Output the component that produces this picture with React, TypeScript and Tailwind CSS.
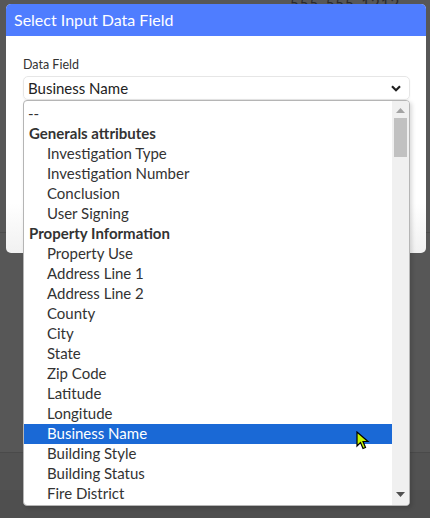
import React from 'react';

type Row = { label: string; group?: boolean; selected?: boolean };

const rows: Row[] = [
  { label: '--' },
  { label: 'Generals attributes', group: true },
  { label: 'Investigation Type' },
  { label: 'Investigation Number' },
  { label: 'Conclusion' },
  { label: 'User Signing' },
  { label: 'Property Information', group: true },
  { label: 'Property Use' },
  { label: 'Address Line 1' },
  { label: 'Address Line 2' },
  { label: 'County' },
  { label: 'City' },
  { label: 'State' },
  { label: 'Zip Code' },
  { label: 'Latitude' },
  { label: 'Longitude' },
  { label: 'Business Name', selected: true },
  { label: 'Building Style' },
  { label: 'Building Status' },
  { label: 'Fire District' },
];

const Cursor = () => (
  <svg width="14" height="20" viewBox="0 0 14 20" className="absolute left-[356px] top-[431px]">
    <path d="M1 1 L1 15 L4.5 11.5 L7 17.5 L9.5 16.5 L7 10.5 L12 10.5 Z" fill="#c6f500" stroke="#000" strokeWidth="1.2" />
  </svg>
);

export default function App() {
  return (
    <div className="relative w-[430px] h-[518px] overflow-hidden bg-[#575757] font-['Lato','Noto_Sans',sans-serif] text-[#333]">
      {/* page behind the overlay */}
      <div className="absolute left-[290px] top-[-8px] text-[15px] tracking-[1px] text-[#2a2a2a]">555-555-1212</div>
      <div className="absolute left-0 top-[232px] w-full h-px bg-[#4c4c4c]" />
      <div className="absolute left-0 top-[452px] w-full h-[38px] bg-[#525252] border-t border-[#4a4a4a]" />
      <div className="absolute left-0 top-[490px] w-full h-[28px] bg-[#4f4f4f]" />

      {/* modal */}
      <div className="absolute left-[6px] top-[4px] w-[420px] rounded-[5px] overflow-hidden bg-gradient-to-b from-white from-80% to-[#f1f1f1]">
        <div className="h-[32px] bg-[#4f7dff] flex items-center pl-[8px] text-white text-[16px]">
          Select Input Data Field
        </div>
        <div className="h-[217px] px-[17px] pt-[21px]">
          <div className="text-[12.5px] leading-[16px] text-[#333]">Data Field</div>
          <div className="mt-[3px] h-[24px] w-[387px] rounded-[5px] border border-[#e6e6e6] shadow-[0_1px_2px_rgba(0,0,0,0.06)] flex items-center justify-between pl-[4px] pr-[8px] text-[15px] text-[#222]">
            <span>Business Name</span>
            <svg width="10" height="7" viewBox="0 0 10 7">
              <path d="M1 1.2 L5 5.2 L9 1.2" fill="none" stroke="#222" strokeWidth="2.2" />
            </svg>
          </div>
        </div>
      </div>

      {/* open list */}
      <div className="absolute left-[23px] top-[100px] w-[387px] h-[406px] bg-white border border-[#b5b5b5] rounded-[4px] shadow-[2px_2px_4px_rgba(0,0,0,0.15)] overflow-hidden flex">
        <div className="flex-1 pt-[3px]">
          {rows.map((r) => (
            <div
              key={r.label}
              className={`h-[20px] flex items-center pb-[2px] text-[15px] whitespace-nowrap ${
                r.group ? 'pl-[5px] font-bold' : r.label === '--' ? 'pl-[4px]' : 'pl-[23px]'
              } ${r.selected ? 'bg-[#1a69d6] text-white' : 'text-[#333]'}`}
            >
              {r.label}
            </div>
          ))}
        </div>
        <div className="w-[17px] bg-[#f0f0f0] flex flex-col items-center">
          <svg width="9" height="5" viewBox="0 0 9 5" className="mt-[7px]">
            <path d="M0 5 L4.5 0 L9 5 Z" fill="#a3a3a3" />
          </svg>
          <div className="mt-[5px] w-[13px] h-[39px] bg-[#c1c1c1]" />
          <div className="flex-1" />
          <svg width="9" height="5" viewBox="0 0 9 5" className="mb-[8px]">
            <path d="M0 0 L9 0 L4.5 5 Z" fill="#505050" />
          </svg>
        </div>
      </div>

      <Cursor />
    </div>
  );
}
